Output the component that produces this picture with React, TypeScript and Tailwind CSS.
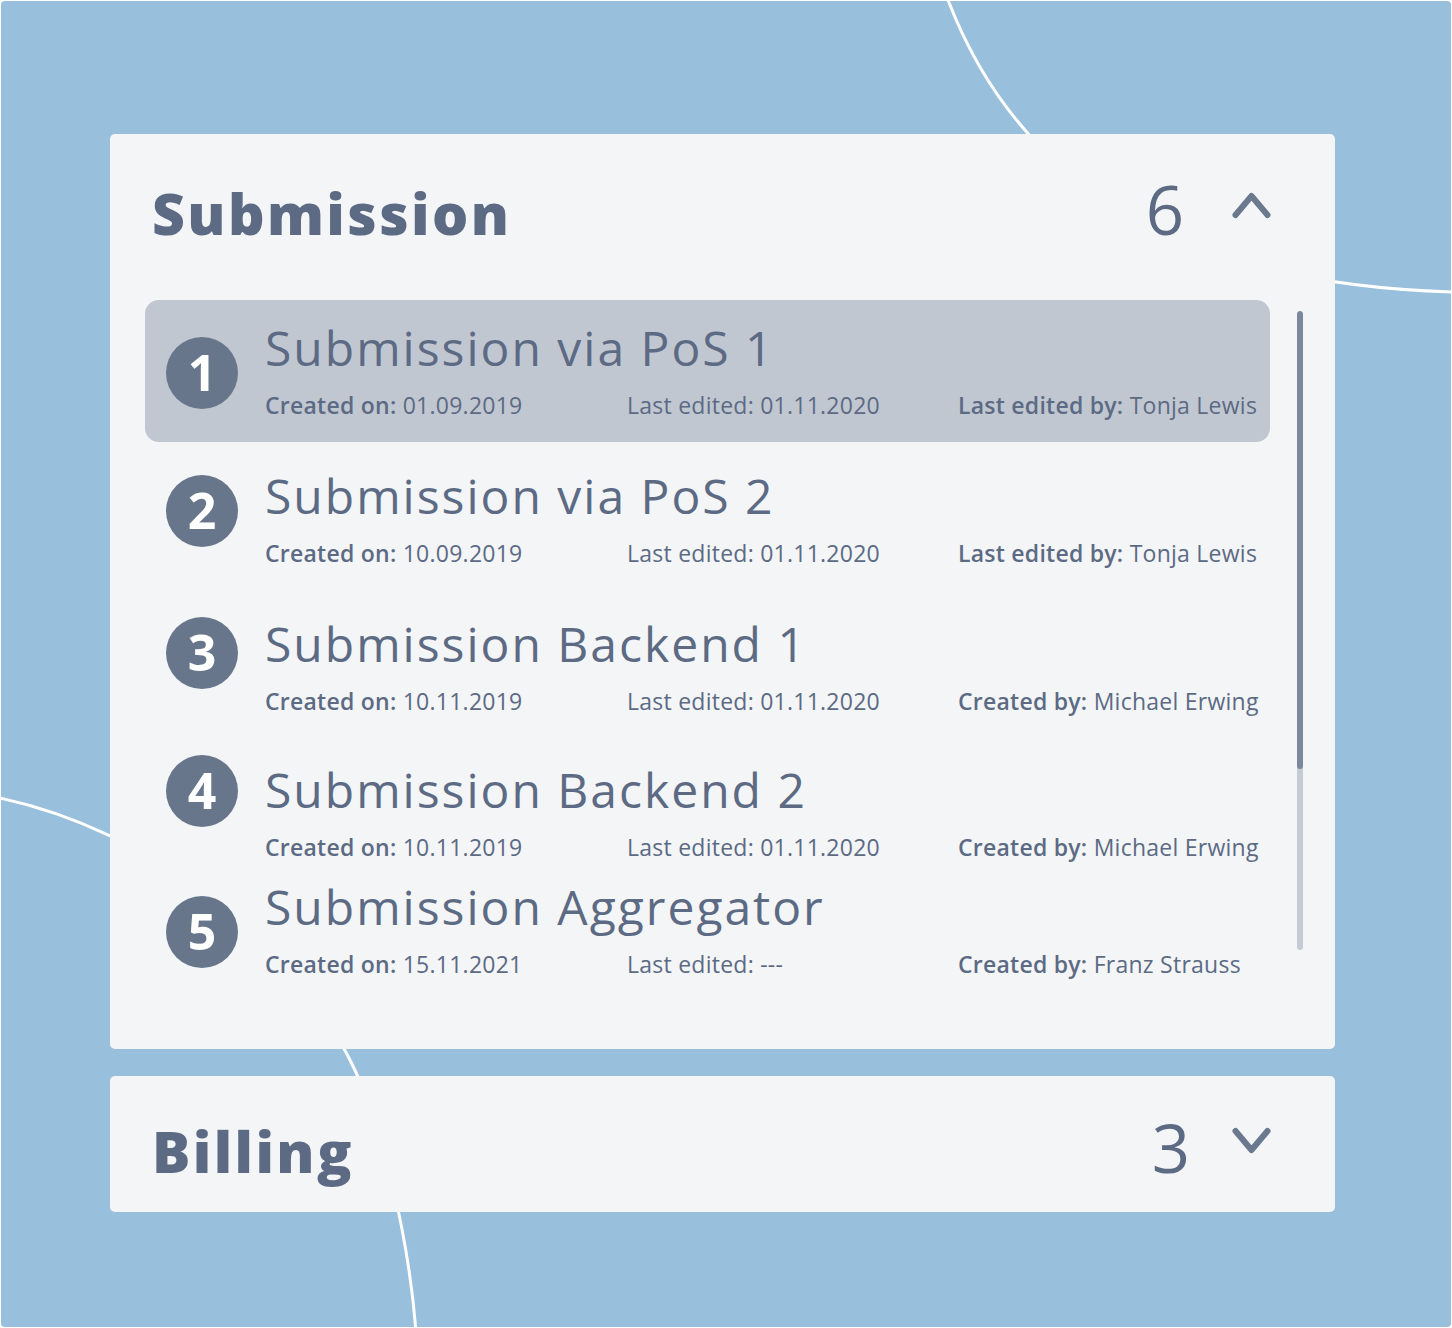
import React from "react";

type Item = {
  n: number;
  title: string;
  created: string;
  edited: string;
  byLabel: string;
  by: string;
  active?: boolean;
  wrap: string;
  circle: string;
};

const items: Item[] = [
  { n: 1, title: "Submission via PoS 1", created: "01.09.2019", edited: "01.11.2020", byLabel: "Last edited by:", by: "Tonja Lewis", active: true, wrap: "h-[142px] mb-[6px]", circle: "mt-[37px]" },
  { n: 2, title: "Submission via PoS 2", created: "10.09.2019", edited: "01.11.2020", byLabel: "Last edited by:", by: "Tonja Lewis", wrap: "h-[148px]", circle: "mt-[27px]" },
  { n: 3, title: "Submission Backend 1", created: "10.11.2019", edited: "01.11.2020", byLabel: "Created by:", by: "Michael Erwing", wrap: "h-[146px]", circle: "mt-[21px]" },
  { n: 4, title: "Submission Backend 2", created: "10.11.2019", edited: "01.11.2020", byLabel: "Created by:", by: "Michael Erwing", wrap: "h-[117px]", circle: "mt-[13px]" },
  { n: 5, title: "Submission Aggregator", created: "15.11.2021", edited: "---", byLabel: "Created by:", by: "Franz Strauss", wrap: "h-[142px]", circle: "mt-[37px]" },
];

function Chevron({ up }: { up: boolean }) {
  return (
    <svg width="40" height="27" viewBox="0 0 40 27" fill="none" className="shrink-0">
      <path
        d={up ? "M3.5 23 L19.5 4 L35.5 23" : "M3.5 4 L19.5 23 L35.5 4"}
        stroke="#6b798f"
        strokeWidth="6"
        strokeLinecap="round"
        strokeLinejoin="round"
      />
    </svg>
  );
}

function Row({ item }: { item: Item }) {
  return (
    <div
      className={`${item.wrap} flex items-start pl-[21px] rounded-[14px] ${
        item.active ? "bg-[#c0c7d1]" : ""
      }`}
    >
      <div
        className={`${item.circle} size-[72px] shrink-0 rounded-full bg-[#68768c] flex items-center justify-center`}
      >
        <span className="text-white text-[50px] font-bold leading-none -mt-[3px]">{item.n}</span>
      </div>
      <div className="ml-[27px] pt-[20px] flex-1">
        <div className="text-[48px] leading-[56px] tracking-[2px] text-[#5c6a84] whitespace-nowrap">
          {item.title}
        </div>
        <div className="mt-[15px] grid grid-cols-[362px_331px_1fr] text-[23px] leading-[28px] tracking-[0.25px] text-[#5c6a84] whitespace-nowrap">
          <div>
            <span className="font-semibold">Created on:</span> {item.created}
          </div>
          <div>Last edited: {item.edited}</div>
          <div>
            <span className="font-semibold">{item.byLabel}</span> {item.by}
          </div>
        </div>
      </div>
    </div>
  );
}

export default function App() {
  return (
    <div className="w-[1452px] h-[1328px] bg-white p-[1px] font-['Open_Sans',sans-serif]">
      <div className="relative h-full w-full rounded-[4px] bg-[#98bfdc] overflow-hidden pt-[133px] pl-[109px]">
        <svg
          className="absolute inset-0"
          width="1450"
          height="1326"
          viewBox="1 1 1450 1326"
          fill="none"
        >
          <path d="M948 0 C1025 200, 1200 285, 1455 292" stroke="white" strokeWidth="3" />
          <path
            d="M0 798 C150 830, 290 940, 351 1062 C380 1120, 408 1230, 416 1332"
            stroke="white"
            strokeWidth="3"
          />
        </svg>

        {/* Submission card */}
        <div className="relative w-[1225px] rounded-[5px] bg-[#f3f5f7] pt-[42px] pb-[48px]">
          <div className="flex items-baseline pl-[42px] pr-[63px]">
            <div className="flex-1 text-[57px] leading-[57px] font-extrabold tracking-[2.4px] text-[#5c6a84]">
              Submission
            </div>
            <div className="text-[67px] leading-[67px] text-[#5c6a84]">6</div>
            <div className="self-start mt-[16px] ml-[48px]">
              <Chevron up />
            </div>
          </div>
          <div className="flex mt-[57px] pl-[35px]">
            <div className="w-[1125px] flex flex-col">
              {items.map((it) => (
                <Row key={it.n} item={it} />
              ))}
            </div>
            <div className="ml-[27px] mt-[11px] w-[6px] h-[639px] rounded-full bg-[#c5cbd4] overflow-hidden">
              <div className="w-full h-[458px] rounded-full bg-[#7c889b]" />
            </div>
          </div>
        </div>

        {/* Billing card */}
        <div className="relative mt-[27px] w-[1225px] h-[136px] rounded-[5px] bg-[#f3f5f7] pt-[38px]">
          <div className="flex items-baseline pl-[42px] pr-[63px]">
            <div className="flex-1 text-[57px] leading-[57px] font-extrabold tracking-[2.4px] text-[#5c6a84]">
              Billing
            </div>
            <div className="text-[67px] leading-[67px] text-[#5c6a84]">3</div>
            <div className="self-start mt-[13px] ml-[42px]">
              <Chevron up={false} />
            </div>
          </div>
        </div>
      </div>
    </div>
  );
}
